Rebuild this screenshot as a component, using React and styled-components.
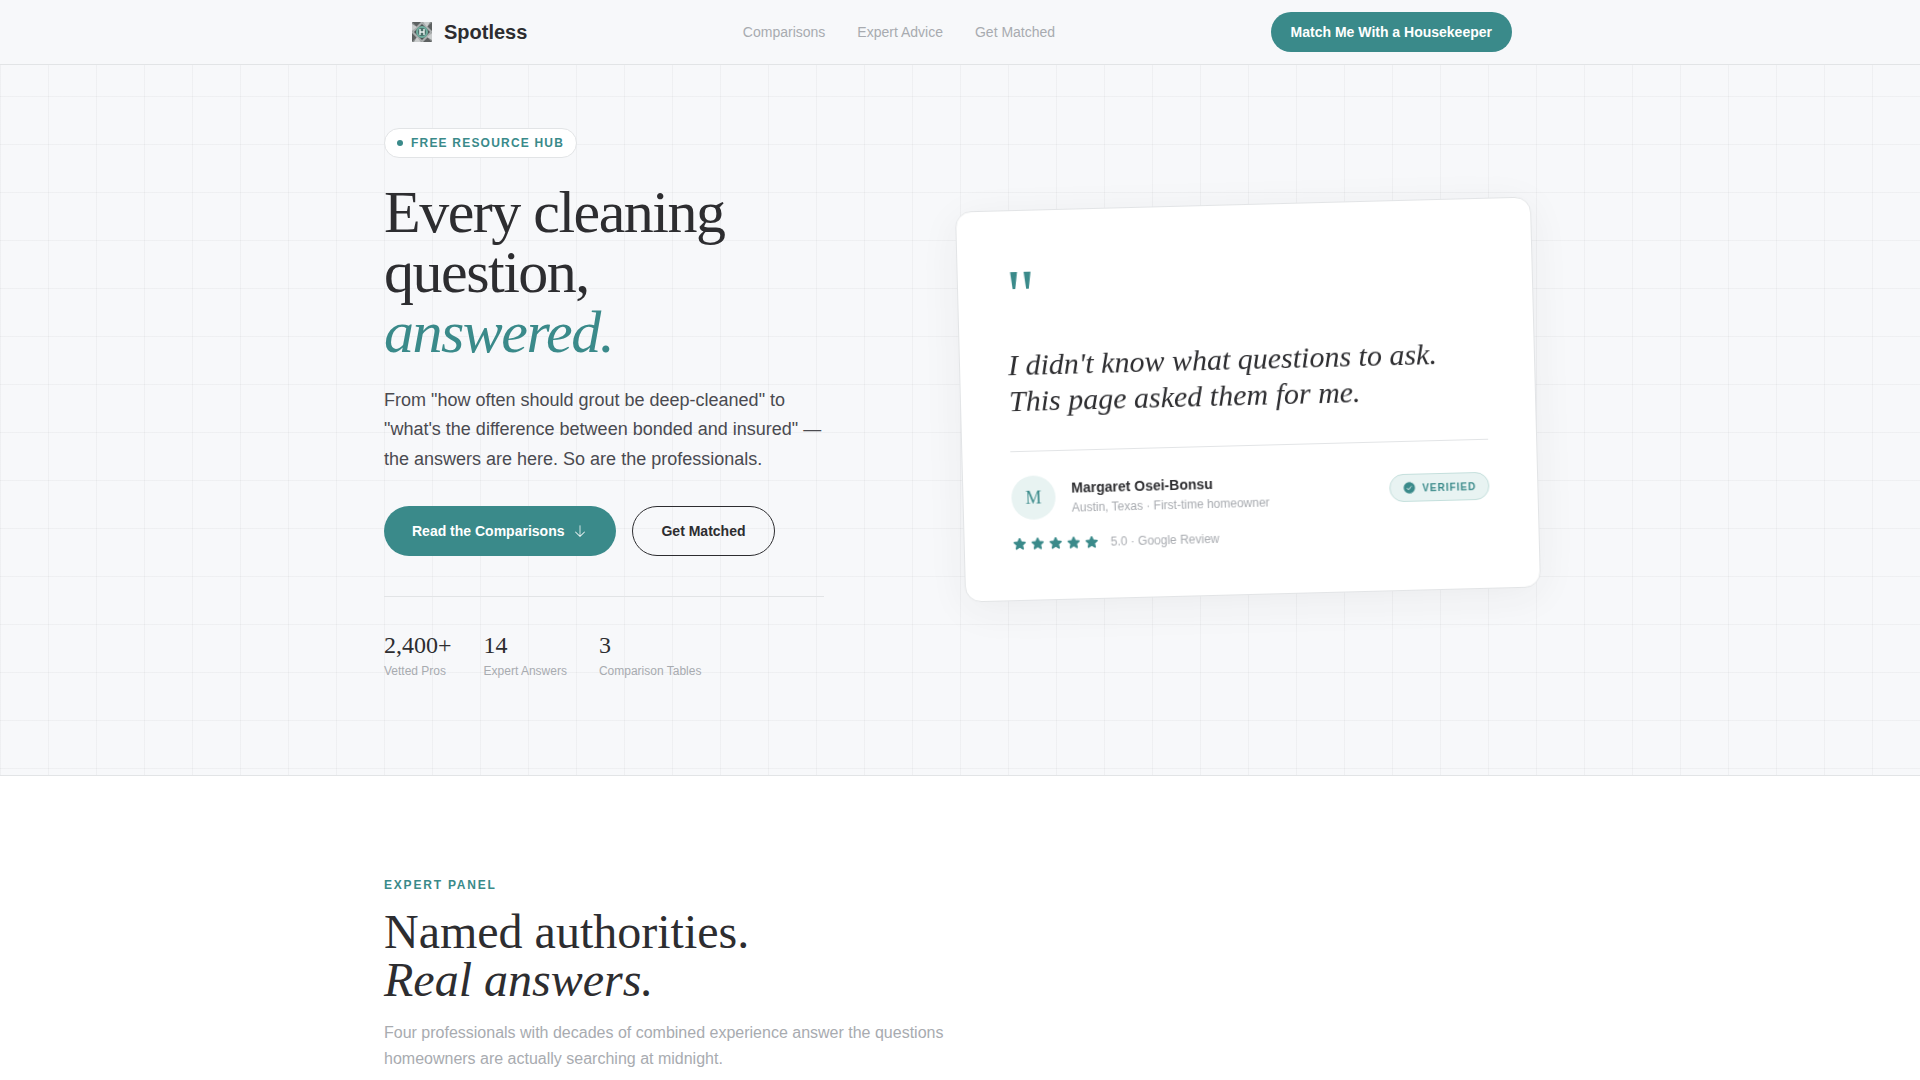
import React from 'react';
import styled, { createGlobalStyle } from 'styled-components';
import { PiArrowDownLight, PiCheckCircleFill, PiStarFill } from 'react-icons/pi';

const stats = [
  { value: '2,400+', label: 'Vetted Pros' },
  { value: '14', label: 'Expert Answers' },
  { value: '3', label: 'Comparison Tables' },
];

const Logo = () => (
  <svg width="20" height="20" viewBox="0 0 20 20" aria-hidden="true">
    <rect width="20" height="20" fill="#a9adad" />
    <path d="M0 0h9L4 5zM20 0v9l-5-5zM20 20h-9l5-5zM0 20v-9l5 5z" fill="#5d6161" />
    <path d="M10 0h10l-4 4zM20 10v10l-4-4zM10 20H0l4-4zM0 10V0l4 4z" fill="#8b8f8f" />
    <path d="M0 2l5 3-5 4zM18 0l-3 5-4-5zM20 18l-5-3 5-4zM2 20l3-5 4 5z" fill="#c9cccc" />
    <path d="M10 2l8 8-8 8-8-8z" fill="#4c5555" />
    <circle cx="10" cy="10" r="5" fill="#4b6f69" stroke="#6fae9f" strokeWidth="2" />
    <path d="M8 7v6M12 7v6M8 10h4" stroke="#e9f2f0" strokeWidth="1.4" />
  </svg>
);

const App = () => {
  return (
    <>
      <GlobalStyle />
      <StyledHeader>
        <StyledNavBar>
          <StyledBrand href="#">
            <StyledLogo>
              <Logo />
            </StyledLogo>
            Spotless
          </StyledBrand>
          <StyledNav>
            <a href="#comparisons">Comparisons</a>
            <a href="#experts">Expert Advice</a>
            <a href="#match">Get Matched</a>
          </StyledNav>
          <StyledMatchButton>Match Me With a Housekeeper</StyledMatchButton>
        </StyledNavBar>
      </StyledHeader>
      <StyledHero>
        <StyledHeroGrid>
          <StyledIntro>
            <StyledBadge>
              <StyledDot />
              FREE RESOURCE HUB
            </StyledBadge>
            <StyledTitle>
              Every cleaning question, <em>answered.</em>
            </StyledTitle>
            <StyledLead>
              From "how often should grout be deep-cleaned" to "what's the difference between bonded
              and insured" — the answers are here. So are the professionals.
            </StyledLead>
            <StyledActions>
              <StyledButton $primary>
                Read the Comparisons
                <PiArrowDownLight size={16} />
              </StyledButton>
              <StyledButton>Get Matched</StyledButton>
            </StyledActions>
            <StyledStats>
              {stats.map((stat) => (
                <div key={stat.label}>
                  <StyledStatValue>{stat.value}</StyledStatValue>
                  <StyledStatLabel>{stat.label}</StyledStatLabel>
                </div>
              ))}
            </StyledStats>
          </StyledIntro>
          <StyledCard>
            <StyledQuoteMark>"</StyledQuoteMark>
            <StyledQuote>I didn't know what questions to ask. This page asked them for me.</StyledQuote>
            <StyledAuthor>
              <StyledAvatar>M</StyledAvatar>
              <StyledAuthorText>
                <StyledName>Margaret Osei-Bonsu</StyledName>
                <StyledSmall>Austin, Texas · First-time homeowner</StyledSmall>
              </StyledAuthorText>
              <StyledVerified>
                <PiCheckCircleFill size={14} />
                VERIFIED
              </StyledVerified>
            </StyledAuthor>
            <StyledRating>
              <StyledStars>
                {[1, 2, 3, 4, 5].map((n) => (
                  <PiStarFill key={n} size={14} />
                ))}
              </StyledStars>
              <StyledSmall>5.0 · Google Review</StyledSmall>
            </StyledRating>
          </StyledCard>
        </StyledHeroGrid>
      </StyledHero>
      <StyledPanel id="experts">
        <StyledContainer>
          <StyledEyebrow>EXPERT PANEL</StyledEyebrow>
          <StyledHeading>
            Named authorities.
            <br />
            <em>Real answers.</em>
          </StyledHeading>
          <StyledPanelText>
            Four professionals with decades of combined experience answer the questions homeowners
            are actually searching at midnight.
          </StyledPanelText>
        </StyledContainer>
      </StyledPanel>
    </>
  );
};

const sans = '"Liberation Sans", Arial, sans-serif';
const serif = '"Liberation Serif", "Times New Roman", serif';
const teal = '#3a8a8a';
const ink = '#2d2d30';
const muted = '#a8abb0';
const line = '#e2e4e6';

const GlobalStyle = createGlobalStyle`
  *, *::before, *::after {
    box-sizing: border-box;
  }
  body {
    margin: 0;
    background: #ffffff;
    color: ${ink};
    font-family: ${sans};
    overflow-x: hidden;
  }
  button {
    font-family: inherit;
    cursor: pointer;
  }
  h1, h2, p {
    margin: 0;
  }
`;
const StyledHeader = styled.header`
  position: fixed;
  top: 0;
  left: 0;
  right: 0;
  z-index: 10;
  padding: 0 24px;
  background: #f7f8fa;
  border-bottom: 1px solid ${line};
`;
const StyledContainer = styled.div`
  max-width: 1152px;
  margin: 0 auto;
`;
const StyledNavBar = styled(StyledContainer)`
  display: flex;
  align-items: center;
  justify-content: space-between;
  height: 64px;
  padding: 0 24px;
`;
const StyledBrand = styled.a`
  display: flex;
  align-items: center;
  gap: 8px;
  color: ${ink};
  font-size: 20px;
  font-weight: 700;
  text-decoration: none;
`;
const StyledLogo = styled.span`
  display: flex;
  padding: 4px;
`;
const StyledNav = styled.nav`
  display: flex;
  gap: 32px;
  > a {
    color: ${muted};
    font-size: 14px;
    text-decoration: none;
  }
`;
const StyledMatchButton = styled.button`
  height: 40px;
  padding: 0 20px;
  border: 0;
  border-radius: 20px;
  background: ${teal};
  color: #ffffff;
  font-size: 14px;
  font-weight: 700;
`;
const StyledHero = styled.section`
  padding: 128px 24px 96px;
  border-bottom: 1px solid ${line};
  background-color: #f7f8fa;
  background-image: linear-gradient(rgba(45, 45, 48, 0.04) 1px, transparent 1px),
    linear-gradient(90deg, rgba(45, 45, 48, 0.04) 1px, transparent 1px);
  background-size: 48px 48px;
`;
const StyledHeroGrid = styled(StyledContainer)`
  display: grid;
  grid-template-columns: 1fr 1fr;
`;
const StyledIntro = styled.div`
  max-width: 440px;
`;
const StyledBadge = styled.div`
  display: inline-flex;
  align-items: center;
  gap: 8px;
  height: 30px;
  padding: 0 12px;
  border: 1px solid ${line};
  border-radius: 15px;
  background: #ffffff;
  color: ${teal};
  font-size: 12px;
  font-weight: 700;
  letter-spacing: 0.1em;
`;
const StyledDot = styled.span`
  width: 6px;
  height: 6px;
  border-radius: 50%;
  background: ${teal};
`;
const StyledTitle = styled.h1`
  margin-top: 24px;
  font-family: ${serif};
  font-size: 60px;
  font-weight: 400;
  line-height: 60px;
  letter-spacing: -0.025em;
  > em {
    display: block;
    color: ${teal};
  }
`;
const StyledLead = styled.p`
  margin-top: 24px;
  color: #4a4a50;
  font-size: 18px;
  line-height: 1.625;
`;
const StyledActions = styled.div`
  display: flex;
  gap: 16px;
  margin-top: 32px;
`;
const StyledButton = styled.button`
  display: flex;
  align-items: center;
  gap: 8px;
  height: 50px;
  padding: 0 28px;
  border: ${({ $primary }) => ($primary ? '0' : `1px solid ${ink}`)};
  border-radius: 25px;
  background: ${({ $primary }) => ($primary ? teal : 'transparent')};
  color: ${({ $primary }) => ($primary ? '#ffffff' : ink)};
  font-size: 14px;
  font-weight: 700;
`;
const StyledStats = styled.div`
  display: flex;
  gap: 32px;
  margin-top: 40px;
  padding-top: 32px;
  border-top: 1px solid ${line};
`;
const StyledStatValue = styled.div`
  font-family: ${serif};
  font-size: 24px;
  line-height: 32px;
`;
const StyledStatLabel = styled.div`
  margin-top: 2px;
  color: ${muted};
  font-size: 12px;
  line-height: 16px;
`;
const StyledCard = styled.div`
  align-self: center;
  margin-bottom: 8px;
  padding: 48px;
  border: 1px solid ${line};
  border-radius: 16px;
  background: #ffffff;
  box-shadow: 0 8px 40px rgba(45, 45, 48, 0.06);
  transform: rotate(-1.5deg);
  will-change: transform;
`;
const StyledQuoteMark = styled.div`
  color: ${teal};
  font-family: ${serif};
  font-size: 72px;
  line-height: 72px;
`;
const StyledQuote = styled.p`
  margin-top: 16px;
  font-family: ${serif};
  font-size: 30px;
  font-style: italic;
  line-height: 36px;
`;
const StyledAuthor = styled.div`
  display: flex;
  align-items: center;
  gap: 16px;
  margin-top: 32px;
  padding-top: 24px;
  border-top: 1px solid ${line};
`;
const StyledAvatar = styled.div`
  display: flex;
  align-items: center;
  justify-content: center;
  width: 44px;
  height: 44px;
  border-radius: 50%;
  background: #e8f3f2;
  color: ${teal};
  font-family: ${serif};
  font-size: 18px;
`;
const StyledAuthorText = styled.div`
  display: flex;
  flex: 1;
  flex-direction: column;
  gap: 2px;
`;
const StyledName = styled.div`
  font-size: 14px;
  font-weight: 700;
  line-height: 20px;
`;
const StyledSmall = styled.div`
  color: ${muted};
  font-size: 12px;
  line-height: 16px;
`;
const StyledVerified = styled.div`
  display: flex;
  align-items: center;
  gap: 6px;
  height: 28px;
  padding: 0 12px;
  border: 1px solid #c4dfdc;
  border-radius: 14px;
  background: #e8f3f2;
  color: ${teal};
  font-size: 10px;
  font-weight: 700;
  letter-spacing: 0.1em;
`;
const StyledRating = styled.div`
  display: flex;
  align-items: center;
  gap: 12px;
  margin-top: 16px;
`;
const StyledStars = styled.div`
  display: flex;
  gap: 4px;
  color: ${teal};
`;
const StyledPanel = styled.section`
  padding: 100px 24px;
`;
const StyledEyebrow = styled.p`
  color: ${teal};
  font-size: 12px;
  font-weight: 700;
  line-height: 18px;
  letter-spacing: 0.15em;
`;
const StyledHeading = styled.h2`
  margin-top: 14px;
  font-family: ${serif};
  font-size: 48px;
  font-weight: 400;
  line-height: 48px;
`;
const StyledPanelText = styled.p`
  max-width: 576px;
  margin-top: 16px;
  color: ${muted};
  font-size: 16px;
  line-height: 26px;
`;

export default App;
